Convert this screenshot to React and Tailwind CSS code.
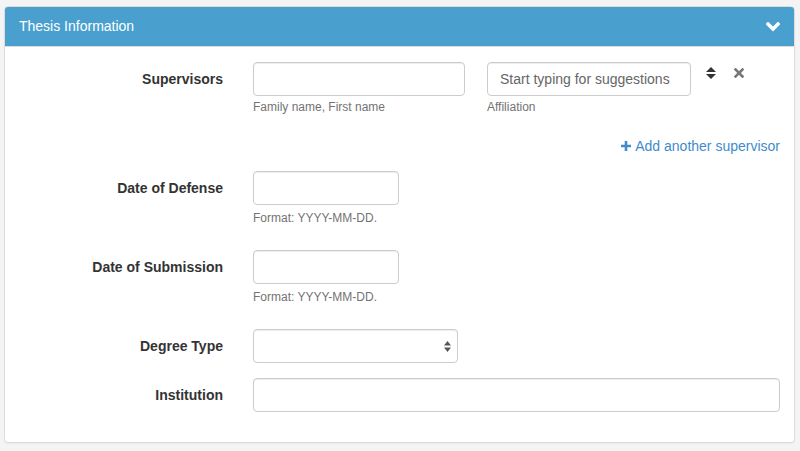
import React from 'react';

const inputCls =
  'h-[34px] rounded-[4px] border border-[#cccccc] bg-white px-3 text-[14px] text-[#555] shadow-[inset_0_1px_1px_rgba(0,0,0,0.075)] outline-none';

function Label({ children }) {
  return (
    <div className="w-[204px] shrink-0 pt-[7px] text-right text-[14px] font-bold leading-[20px] text-[#333]">
      {children}
    </div>
  );
}

function Help({ children, tight }) {
  return (
    <div className={`${tight ? 'mt-[3px]' : 'mt-[5px]'} h-[17px] text-[12px] leading-[17px] text-[#737373]`}>
      {children}
    </div>
  );
}

function SortIcon() {
  return (
    <svg width="10" height="12" viewBox="0 0 10 12">
      <path d="M5 0 L10 5 L0 5 Z" fill="#333" />
      <path d="M0 7 L10 7 L5 12 Z" fill="#333" />
    </svg>
  );
}

function RemoveIcon() {
  return (
    <svg width="10" height="10" viewBox="0 0 10 10">
      <path d="M1.5 1.5 L8.5 8.5 M8.5 1.5 L1.5 8.5" stroke="#777" strokeWidth="2.6" strokeLinecap="square" />
    </svg>
  );
}

export default function App() {
  return (
    <div className="min-h-[451px] bg-[#f4f4f4] pt-[6px] pl-[4px] pr-[5px]" style={{ fontFamily: '"Liberation Sans", Arial, sans-serif' }}>
      <div className="overflow-hidden rounded-[4px] border border-[#dddddd] bg-white shadow-[0_1px_1px_rgba(0,0,0,0.05)]">
        {/* header */}
        <div className="flex h-[40px] items-center justify-between border-b border-[#dddddd] bg-[#49a0cf] pl-[14px] pr-[14px]">
          <span className="text-[14px] text-white">Thesis Information</span>
          <svg width="14" height="10" viewBox="0 0 14 10">
            <path d="M2 2 L7 7 L12 2" stroke="white" strokeWidth="3.4" fill="none" strokeLinecap="square" />
          </svg>
        </div>

        {/* body */}
        <div className="px-[14px] pt-[15px] pb-[30px]">
          {/* supervisors */}
          <div className="flex">
            <Label>Supervisors</Label>
            <div className="ml-[30px] flex">
              <div>
                <input className={`${inputCls} w-[212px]`} />
                <Help tight>Family name, First name</Help>
              </div>
              <div className="ml-[22px]">
                <input className={`${inputCls} w-[204px] placeholder:text-[#666]`} placeholder="Start typing for suggestions" />
                <Help tight>Affiliation</Help>
              </div>
              <div className="ml-[15px] flex h-[20px] items-center gap-[18px] pt-[1px]">
                <SortIcon />
                <RemoveIcon />
              </div>
            </div>
          </div>

          {/* add another */}
          <div className="mt-[20px] mb-[15px] flex h-[20px] items-center justify-end">
            <span className="flex items-center gap-[3px] text-[14px] text-[#428bca]">
              <svg width="12" height="12" viewBox="0 0 12 12">
                <path d="M6 1 V11 M1 6 H11" stroke="#428bca" strokeWidth="2.6" />
              </svg>
              Add another supervisor
            </span>
          </div>

          {/* date of defense */}
          <div className="mb-[23px] flex">
            <Label>Date of Defense</Label>
            <div className="ml-[30px]">
              <input className={`${inputCls} w-[146px]`} />
              <Help>Format: YYYY-MM-DD.</Help>
            </div>
          </div>

          {/* date of submission */}
          <div className="mb-[23px] flex">
            <Label>Date of Submission</Label>
            <div className="ml-[30px]">
              <input className={`${inputCls} w-[146px]`} />
              <Help>Format: YYYY-MM-DD.</Help>
            </div>
          </div>

          {/* degree type */}
          <div className="mb-[15px] flex">
            <Label>Degree Type</Label>
            <div className={`${inputCls} ml-[30px] flex w-[205px] items-center justify-end pr-[6px]`}>
              <svg width="7" height="11" viewBox="0 0 7 11">
                <path d="M3.5 0 L7 4.5 L0 4.5 Z" fill="#555" />
                <path d="M0 6.5 L7 6.5 L3.5 11 Z" fill="#555" />
              </svg>
            </div>
          </div>

          {/* institution */}
          <div className="flex">
            <Label>Institution</Label>
            <input className={`${inputCls} ml-[30px] flex-1`} />
          </div>
        </div>
      </div>
    </div>
  );
}
